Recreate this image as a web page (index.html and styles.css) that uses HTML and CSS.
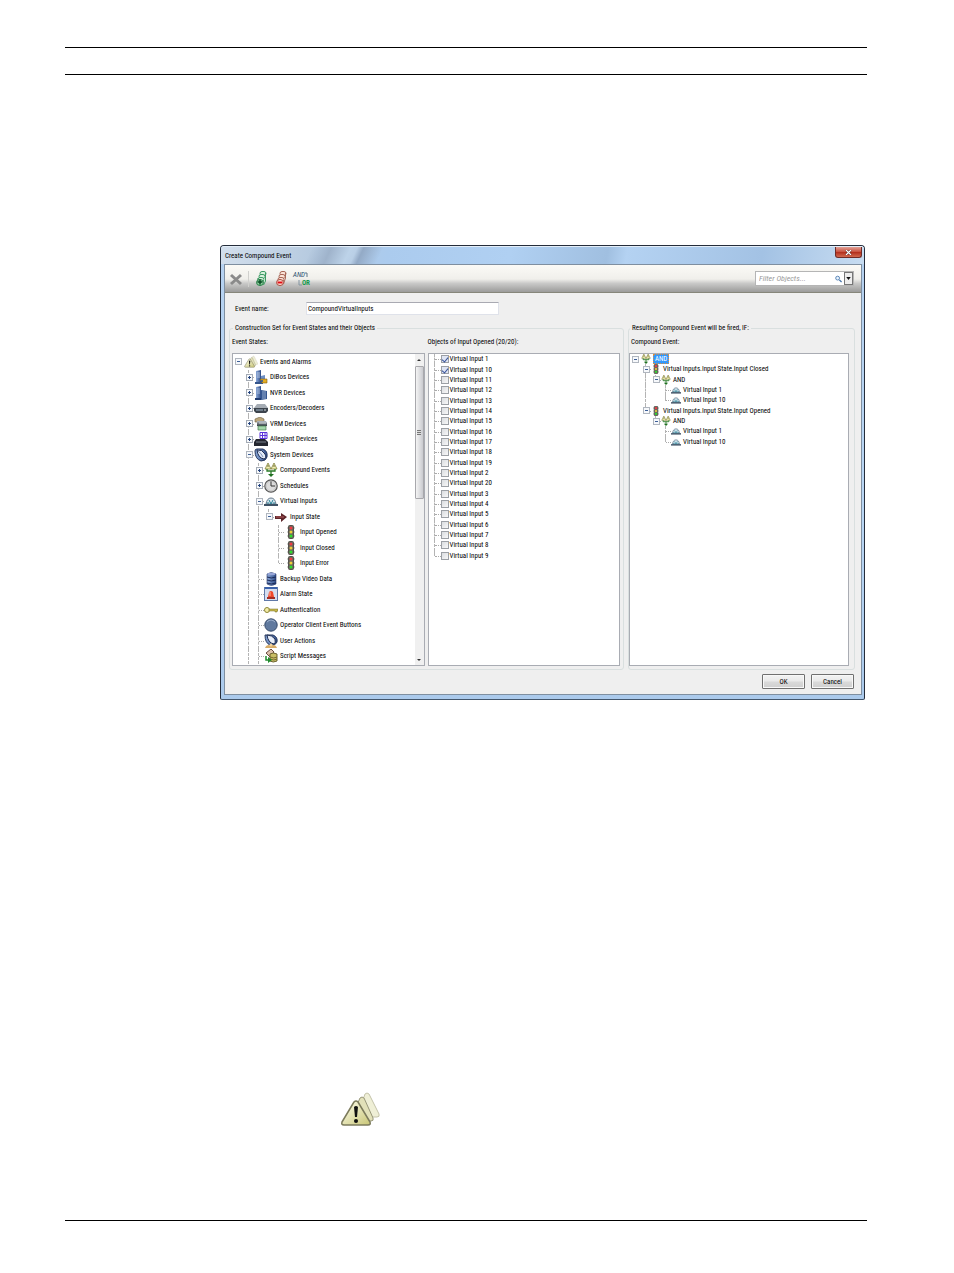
FILE: index.html
```html
<!DOCTYPE html>
<html lang="en">
<head>
<meta charset="utf-8">
<title>Create Compound Event</title>
<link rel="stylesheet" href="styles.css">
</head>
<body>
<svg class="defs" aria-hidden="true">
<defs>
<linearGradient id="blue" x1="0" x2="1"><stop offset="0" stop-color="#8aa8d8"/><stop offset="1" stop-color="#2c4a86"/></linearGradient>
<linearGradient id="grey" x1="0" x2="0" y1="0" y2="1"><stop offset="0" stop-color="#b8c0c8"/><stop offset="1" stop-color="#30363e"/></linearGradient>
<linearGradient id="cream" x1="0" x2="1" y1="0" y2="1"><stop offset="0" stop-color="#fffff0"/><stop offset="1" stop-color="#c9c676"/></linearGradient>
<symbol id="plus" viewBox="0 0 7 7"><rect x=".5" y=".5" width="6" height="6" fill="#f6f8fb" stroke="#a4abb5"/><path d="M2 3.5h3M3.500 2v3" stroke="#26457f"/></symbol>
<symbol id="minus" viewBox="0 0 7 7"><rect x=".5" y=".5" width="6" height="6" fill="#f6f8fb" stroke="#b0b6bf"/><path d="M2 3.500h3" stroke="#3d5f98"/></symbol>
<symbol id="warn" viewBox="0 0 40 36"><g stroke-linejoin="round"><path d="M25 2q2-2 4 0l10 20q1 3-2 3H17z" fill="#efefd6" stroke="#c4c3aa"/><path d="M20 6q2-2 4 0l9 20q1 3-2 3H10z" fill="#e2e1b9" stroke="#98977a"/><path d="M14 10q2-2 4 0l12 20q1 3-2 3H4q-3 0-2-3z" fill="url(#cream)" stroke="#7c7b5c" stroke-width="1.500"/></g><path d="M14 15q2-2 4 0l-1 10h-2z" fill="#111"/><circle cx="16" cy="29" r="2" fill="#111"/></symbol>
<symbol id="dibos" viewBox="0 0 14 14"><path d="M2 1l5-1v12H2z" fill="url(#blue)"/><path d="M7 6l4-1v7H7z" fill="#6d8ec2"/><path d="M3 3h3M3 5h3M3 7h3" stroke="#dbe7f8" stroke-width=".7"/><path d="M1 12h8v2H1z" fill="#34558c"/><path d="M6 9h7v4H8z" fill="#e4ad22" stroke="#805a12" stroke-width=".6"/><circle cx="8" cy="11" r="1" fill="#2653a0"/></symbol>
<symbol id="nvr" viewBox="0 0 14 14"><path d="M2 1l5-1v13H2z" fill="url(#blue)"/><path d="M7 4l6 1v8l-6 1z" fill="#34558f"/><path d="M3 3h3M3 5h3M3 7h3M8 6h4M8 8h4M8 10h4M8 12h4" stroke="#c3d4ec" stroke-width=".7"/><path d="M1 12h6v2H1z" fill="#203c70"/></symbol>
<symbol id="enc" viewBox="0 0 14 14"><path d="M3 3h8l3 4H0z" fill="#a5acb4"/><path d="M0 7h14v3l-2 2H2l-2-2z" fill="#3c444d"/><path d="M2 9h7" stroke="#9eb3c7"/><circle cx="11" cy="9" r=".8" fill="#e5edf4"/></symbol>
<symbol id="vrm" viewBox="0 0 14 14"><path d="M1 2l5-2 4 2v3H1z" fill="#bca77c" stroke="#6e6042" stroke-width=".6"/><path d="M3 4h9l1 2v3H3z" fill="url(#grey)"/><path d="M4 9h8v4H4z" fill="#a3d6aa" stroke="#477b51" stroke-width=".7"/><path d="M5 6h7" stroke="#d3d8dc"/></symbol>
<symbol id="alleg" viewBox="0 0 14 14"><path d="M6 0h7v7H6z" fill="#fff"/><path d="M6 .5h7v6H6zM8.500 0v7M11 0v7M6 3.500h7" stroke="#5a33db" fill="none"/><path d="M2 7h9l3 3v4H0v-4z" fill="#252730"/><path d="M2 10h10" stroke="#7d838c"/></symbol>
<symbol id="sys" viewBox="0 0 14 14"><path d="M1 3q0-2 2-2h6q5 2 4 8-1 4-6 4-6-2-6-10z" fill="url(#blue)" stroke="#26375c"/><path d="M3 2q5-1 8 4 2 4-1 5-6-1-7-9z" fill="#e3ebf8" stroke="#1d2c50"/><path d="M4 3q3 2 5 6" stroke="#7f93ba" fill="none"/></symbol>
<symbol id="comp" viewBox="0 0 14 14"><path d="M4 0l3 6H1zM10 0l3 6H7z" fill="#f2efb0" stroke="#80803c" stroke-width=".8"/><path d="M4 2v2M10 2v2" stroke="#4c4a20" stroke-width=".8"/><path d="M3 6v2h8V6M7 8v4" stroke="#2a7a27" fill="none" stroke-width="1.300"/><path d="M4 11h6l-3 3z" fill="#1f7021"/></symbol>
<symbol id="clock" viewBox="0 0 14 14"><circle cx="7" cy="7" r="6.200" fill="#dcdcdc" stroke="#555" stroke-width="1.200"/><path d="M7 2v5h4" stroke="#333" fill="none"/><circle cx="7" cy="7" r="4.800" fill="none" stroke="#bbb" stroke-width=".6"/></symbol>
<symbol id="vin" viewBox="0 0 14 14"><path d="M2 10q1-6 5-6t5 6z" fill="#dce9f1" stroke="#66798b"/><path d="M0 10h14v2H0z" fill="#3e5265"/><path d="M5 6l2 4 2-4M3 9h2M9 9h2" stroke="#258095" fill="none"/></symbol>
<symbol id="arrow" viewBox="0 0 14 14"><path d="M1 6h6V3l6 4-6 5V9H1z" fill="#5d2529"/><path d="M2 7h8" stroke="#b55f60"/></symbol>
<symbol id="light" viewBox="0 0 14 14"><path d="M3.500 3h7M3.500 7h7M3.500 11h7" stroke="#8a8a86" stroke-width="1.500"/><rect x="4.500" y=".5" width="5" height="13" rx="1" fill="#6a685f" stroke="#54524b"/><circle cx="7" cy="3" r="1.500" fill="#f23b45"/><circle cx="7" cy="7" r="1.500" fill="#f0ce3a"/><circle cx="7" cy="11" r="1.500" fill="#2ce12c"/></symbol>
<symbol id="db" viewBox="0 0 14 14"><path d="M3 2q4-3 9 0v10q-5 3-9 0z" fill="url(#blue)" stroke="#283867" stroke-width=".6"/><path d="M3 5q4 2 9 0M3 8q4 2 9 0M3 11q4 2 9 0" stroke="#1d2b58" fill="none"/><ellipse cx="7.500" cy="2" rx="4" ry="1.300" fill="#96a5d7"/></symbol>
<symbol id="alarm" viewBox="0 0 14 14"><rect x=".5" y=".5" width="13" height="13" fill="#d5def0" stroke="#6079a8"/><path d="M1 1h12" stroke="#3a61aa" stroke-width="2"/><path d="M4 10l1-5q2-2 4 0l1 5z" fill="#f0482c"/><path d="M6 5v4" stroke="#ffb49c"/><path d="M3 10h8v2H3z" fill="#a22d25"/></symbol>
<symbol id="key" viewBox="0 0 14 14"><ellipse cx="3" cy="7" rx="2.500" ry="2.500" fill="#f3eda8" stroke="#8d8534"/><path d="M5 6h9v2h-1v1h-2V8H5z" fill="#c6b84c" stroke="#776d26" stroke-width=".5"/></symbol>
<symbol id="round" viewBox="0 0 14 14"><circle cx="7" cy="7" r="6.200" fill="#60799e" stroke="#354a6a"/><path d="M3 4q4-4 8 0" stroke="#9fb2ce" fill="none"/></symbol>
<symbol id="user" viewBox="0 0 14 14"><path d="M1 1h8q5 2 4 7-2 4-7 3-5-2-5-10z" fill="url(#blue)" stroke="#26375c"/><path d="M3 1q5 0 8 4 1 4-1 5-6-1-7-9z" fill="#e8eefa" stroke="#1d2c50"/><path d="M1 14q1-3 4-3l2 1 2-1q3 0 4 3z" fill="#d8ac67"/><circle cx="7" cy="11" r="1.500" fill="#f1d29c"/></symbol>
<symbol id="script" viewBox="0 0 14 14"><path d="M2 4l5-4 3 3-4 5z" fill="#ddc1ac" stroke="#694b42"/><path d="M6 5q3-2 7 0v7q-4 2-7 0z" fill="#c8bd65" stroke="#6c6230"/><path d="M6 8q4 2 7 0M6 10q4 2 7 0" stroke="#766a2f" fill="none"/><path d="M2 7v4h3" stroke="#1f8b2d" fill="none" stroke-width="1.500"/><path d="M4 8l4 3-4 3z" fill="#1f8b2d"/></symbol>
</defs>
</svg>

<div class="page">
<header class="page-head"></header>
<main>
<section class="dialog" aria-label="Create Compound Event">
  <div class="titlebar">
    <h1>Create Compound Event</h1>
    <button class="close" aria-label="Close"><svg viewBox="0 0 8 6"><path d="M1 0l6 6M7 0L1 6" stroke="#4d2020" stroke-width="2.600"/><path d="M1 0l6 6M7 0L1 6" stroke="#fff" stroke-width="1.500"/></svg></button>
  </div>
  <div class="frame">
    <div class="toolbar">
      <button class="tool" aria-label="Delete"><svg viewBox="0 0 16 18"><path d="M3 5l10 9M13 5L3 14" stroke="#8a8a8a" stroke-width="3"/></svg></button>
      <span class="sep"></span>
      <button class="tool" aria-label="Add objects"><svg viewBox="0 0 16 18"><g fill="#d7f0dc" stroke="#3d9a63"><rect x="7" y="1.500" width="6" height="4" rx="2"/><rect x="6" y="4.500" width="6" height="4" rx="2"/><rect x="5" y="7.500" width="6" height="4" rx="2"/><path d="M5 8v5M12.500 3v8l-2 4"/></g><ellipse cx="7" cy="12.500" rx="3.500" ry="3" fill="#8fce9e" stroke="#278048"/><path d="M4.500 12h5M7 9.500v5" stroke="#074c24" stroke-width="1.500"/></svg></button>
      <button class="tool" aria-label="Remove objects"><svg viewBox="0 0 16 18"><g fill="#fae2d6" stroke="#a86758"><rect x="7" y="1.500" width="6" height="4" rx="2"/><rect x="6" y="4.500" width="6" height="4" rx="2"/><rect x="5" y="7.500" width="6" height="4" rx="2"/><path d="M12.500 3v5l-2 6"/></g><ellipse cx="7" cy="12.500" rx="3.500" ry="3" fill="#ffe6dc" stroke="#a5493b"/><path d="M4.500 12.500h5" stroke="#e00d14" stroke-width="2"/></svg></button>
      <button class="tool andor"><i>AND<svg viewBox="0 0 4 6"><path d="M0 1h2v4" fill="none" stroke="#5e7587"/></svg></i><b><svg viewBox="0 0 4 6"><path d="M1 0v5h3" fill="none" stroke="#8496a3"/></svg>OR</b></button>
      <div class="filter">
        <input type="text" aria-label="Filter objects" placeholder="Filter Objects...">
        <svg viewBox="0 0 8 8"><circle cx="3" cy="3" r="2.200" fill="#e8f2fc" stroke="#4a7ab0"/><path d="M5 5l2.500 2.500" stroke="#416fa6" stroke-width="1.500"/></svg>
        <button aria-label="Filter options"><svg viewBox="0 0 6 4"><path d="M0 0h6L3 4z" fill="#111"/></svg></button>
      </div>
    </div>

    <div class="name-row">
      <label for="event-name">Event name:</label>
      <input id="event-name" type="text" value="CompoundVirtualInputs">
    </div>

    <div class="panels">
      <fieldset class="construct">
        <legend>Construction Set for Event States and their Objects</legend>
        <div class="column">
          <h2>Event States:</h2>
          <div class="box scroll-box">
            <ul class="tree big">
              <li><span class="g"><svg><use href="#minus"/></svg></span><svg class="ic"><use href="#warn"/></svg>Events and Alarms</li>
              <li><span class="g"></span><span class="g t"><svg><use href="#plus"/></svg></span><svg class="ic"><use href="#dibos"/></svg>DiBos Devices</li>
              <li><span class="g"></span><span class="g t"><svg><use href="#plus"/></svg></span><svg class="ic"><use href="#nvr"/></svg>NVR Devices</li>
              <li><span class="g"></span><span class="g t"><svg><use href="#plus"/></svg></span><svg class="ic"><use href="#enc"/></svg>Encoders/Decoders</li>
              <li><span class="g"></span><span class="g t"><svg><use href="#plus"/></svg></span><svg class="ic"><use href="#vrm"/></svg>VRM Devices</li>
              <li><span class="g"></span><span class="g t"><svg><use href="#plus"/></svg></span><svg class="ic"><use href="#alleg"/></svg>Allegiant Devices</li>
              <li><span class="g"></span><span class="g t"><svg><use href="#minus"/></svg></span><svg class="ic"><use href="#sys"/></svg>System Devices</li>
              <li><span class="g"></span><span class="g v"></span><span class="g t"><svg><use href="#plus"/></svg></span><svg class="ic"><use href="#comp"/></svg>Compound Events</li>
              <li><span class="g"></span><span class="g v"></span><span class="g t"><svg><use href="#plus"/></svg></span><svg class="ic"><use href="#clock"/></svg>Schedules</li>
              <li><span class="g"></span><span class="g v"></span><span class="g t"><svg><use href="#minus"/></svg></span><svg class="ic"><use href="#vin"/></svg>Virtual Inputs</li>
              <li><span class="g"></span><span class="g v"></span><span class="g v"></span><span class="g l"><svg><use href="#minus"/></svg></span><svg class="ic"><use href="#arrow"/></svg>Input State</li>
              <li><span class="g"></span><span class="g v"></span><span class="g v"></span><span class="g"></span><span class="g t"></span><svg class="ic"><use href="#light"/></svg>Input Opened</li>
              <li><span class="g"></span><span class="g v"></span><span class="g v"></span><span class="g"></span><span class="g t"></span><svg class="ic"><use href="#light"/></svg>Input Closed</li>
              <li><span class="g"></span><span class="g v"></span><span class="g v"></span><span class="g"></span><span class="g l"></span><svg class="ic"><use href="#light"/></svg>Input Error</li>
              <li><span class="g"></span><span class="g v"></span><span class="g t"></span><svg class="ic"><use href="#db"/></svg>Backup Video Data</li>
              <li><span class="g"></span><span class="g v"></span><span class="g t"></span><svg class="ic"><use href="#alarm"/></svg>Alarm State</li>
              <li><span class="g"></span><span class="g v"></span><span class="g t"></span><svg class="ic"><use href="#key"/></svg>Authentication</li>
              <li><span class="g"></span><span class="g v"></span><span class="g t"></span><svg class="ic"><use href="#round"/></svg>Operator Client Event Buttons</li>
              <li><span class="g"></span><span class="g v"></span><span class="g t"></span><svg class="ic"><use href="#user"/></svg>User Actions</li>
              <li><span class="g"></span><span class="g v"></span><span class="g t"></span><svg class="ic"><use href="#script"/></svg>Script Messages</li>
            </ul>
            <div class="scrollbar">
              <svg viewBox="0 0 8 12"><path d="M2 7h4L4 5z" fill="#333"/></svg>
              <div class="thumb"><span></span></div>
              <svg viewBox="0 0 8 12"><path d="M2 6h4L4 8z" fill="#333"/></svg>
            </div>
          </div>
        </div>
        <div class="column">
          <h2>Objects of Input Opened (20/20):</h2>
          <div class="box">
            <ul class="tree checks">
              <li><span class="g t"></span><label><input type="checkbox" checked>Virtual Input 1</label></li>
              <li><span class="g t"></span><label><input type="checkbox" checked>Virtual Input 10</label></li>
              <li><span class="g t"></span><label><input type="checkbox">Virtual Input 11</label></li>
              <li><span class="g t"></span><label><input type="checkbox">Virtual Input 12</label></li>
              <li><span class="g t"></span><label><input type="checkbox">Virtual Input 13</label></li>
              <li><span class="g t"></span><label><input type="checkbox">Virtual Input 14</label></li>
              <li><span class="g t"></span><label><input type="checkbox">Virtual Input 15</label></li>
              <li><span class="g t"></span><label><input type="checkbox">Virtual Input 16</label></li>
              <li><span class="g t"></span><label><input type="checkbox">Virtual Input 17</label></li>
              <li><span class="g t"></span><label><input type="checkbox">Virtual Input 18</label></li>
              <li><span class="g t"></span><label><input type="checkbox">Virtual Input 19</label></li>
              <li><span class="g t"></span><label><input type="checkbox">Virtual Input 2</label></li>
              <li><span class="g t"></span><label><input type="checkbox">Virtual Input 20</label></li>
              <li><span class="g t"></span><label><input type="checkbox">Virtual Input 3</label></li>
              <li><span class="g t"></span><label><input type="checkbox">Virtual Input 4</label></li>
              <li><span class="g t"></span><label><input type="checkbox">Virtual Input 5</label></li>
              <li><span class="g t"></span><label><input type="checkbox">Virtual Input 6</label></li>
              <li><span class="g t"></span><label><input type="checkbox">Virtual Input 7</label></li>
              <li><span class="g t"></span><label><input type="checkbox">Virtual Input 8</label></li>
              <li><span class="g l"></span><label><input type="checkbox">Virtual Input 9</label></li>
            </ul>
          </div>
        </div>
      </fieldset>

      <fieldset class="result">
        <legend>Resulting Compound Event will be fired, IF:</legend>
        <div class="column">
          <h2>Compound Event:</h2>
          <div class="box">
            <ul class="tree small">
              <li><span class="g"><svg><use href="#minus"/></svg></span><svg class="ic"><use href="#comp"/></svg><span class="selected">AND</span></li>
              <li><span class="g"></span><span class="g t"><svg><use href="#minus"/></svg></span><svg class="ic"><use href="#light"/></svg>Virtual Inputs.Input State.Input Closed</li>
              <li><span class="g"></span><span class="g v"></span><span class="g l"><svg><use href="#minus"/></svg></span><svg class="ic"><use href="#comp"/></svg>AND</li>
              <li><span class="g"></span><span class="g v"></span><span class="g"></span><span class="g t"></span><svg class="ic"><use href="#vin"/></svg>Virtual Input 1</li>
              <li><span class="g"></span><span class="g v"></span><span class="g"></span><span class="g l"></span><svg class="ic"><use href="#vin"/></svg>Virtual Input 10</li>
              <li><span class="g"></span><span class="g l"><svg><use href="#minus"/></svg></span><svg class="ic"><use href="#light"/></svg>Virtual Inputs.Input State.Input Opened</li>
              <li><span class="g"></span><span class="g"></span><span class="g l"><svg><use href="#minus"/></svg></span><svg class="ic"><use href="#comp"/></svg>AND</li>
              <li><span class="g"></span><span class="g"></span><span class="g"></span><span class="g t"></span><svg class="ic"><use href="#vin"/></svg>Virtual Input 1</li>
              <li><span class="g"></span><span class="g"></span><span class="g"></span><span class="g l"></span><svg class="ic"><use href="#vin"/></svg>Virtual Input 10</li>
            </ul>
          </div>
        </div>
      </fieldset>
    </div>

    <div class="actions"><button>OK</button><button>Cancel</button></div>
  </div>
</section>
<svg class="notice" role="img" aria-label="Compound event"><use href="#warn"/></svg>
</main>
<footer class="page-foot"></footer>
</div>
</body>
</html>
```
FILE: styles.css
```css
* { box-sizing: border-box; }
body { margin: 0; background: #fff; color: #000; font: 7px/10px "Roboto Condensed", "Open Sans Condensed", Lato, sans-serif; }
button, input { font: inherit; color: inherit; margin: 0; padding: 0; }
h1, h2, ul { margin: 0; padding: 0; font: inherit; list-style: none; }
svg { display: block; }
.defs { position: absolute; width: 0; height: 0; }

.page { min-height: 100vh; padding: 47px 87px 52px 65px; display: flex; flex-direction: column; }
.page-head { height: 28px; border-top: 1px solid #000; border-bottom: 1px solid #000; }
.page-foot { border-top: 1px solid #000; }
main { flex: 1; padding: 170px 2px 0 155px; }
.notice { width: 40px; height: 36px; margin: 392px 0 0 120px; }

.dialog {
  border: 1px solid #252d3b; border-bottom-color: #43566c; border-radius: 4px 4px 2px 2px; padding: 0 2px 4px 3px;
  background: linear-gradient(#b5d1f0, #b9d6f4 60%, #abcaec);
}
.titlebar {
  display: flex; justify-content: space-between; height: 18px; margin: 0 -2px 0 -3px; padding-left: 4px;
  background:
    linear-gradient(115deg, transparent 14%, #9fb3cb 17%, #bdd3e9 20%, #b9cfe6 21%, #93aac6 22%, transparent 25%),
    linear-gradient(100deg, #d3dfec, #b7cbe0 14%, #abcbee 26%, #b0d0f2 45%, #a0bfe0 60%, #b4d2f2 63%, #a3c2e4 84%, #c7dcf1);
  border-top: 1px solid #e4eef8; border-radius: 3px 3px 0 0;
}
.titlebar h1 { line-height: 18px; }
.close {
  width: 27px; height: 11px; margin-right: 2px; display: grid; place-items: center;
  border: 1px solid #6e2b27; border-top: 0; border-radius: 0 0 3px 3px;
  background: linear-gradient(#e2a297, #c9513f 48%, #b22e1c 52%, #d2694f);
}
.close svg { width: 7px; height: 5px; }
.frame { border: 1px solid #7f8fa0; background: #efefef; }

.toolbar {
  display: flex; align-items: center; height: 28px; padding: 0 7px 0 3px;
  background: linear-gradient(#fbfaf6, #f0efeb 52%, #c9c9c8 68%, #9b9b9a); border-bottom: 1px solid #86867a;
}
.tool { width: 16px; height: 18px; border: 0; background: none; margin-right: 4px; }
.tool svg { width: 16px; height: 18px; }
.sep { width: 1px; height: 16px; background: #d0d0cd; margin-right: 4px; }
.andor { width: 17px; line-height: 8px; color: #244b6c; }
.andor i, .andor b { display: flex; align-items: center; height: 8px; }
.andor b { color: #159a4d; justify-content: flex-end; }
.andor svg { width: 4px; height: 6px; }
.filter { display: flex; align-items: center; width: 99px; height: 15px; margin-left: auto; background: #fff; border: 1px solid #b5b5b5; }
.filter input { flex: 1; min-width: 0; border: 0; padding-left: 3px; background: none; font-size: 8px; }
.filter input::placeholder { color: #9a9a9a; font-style: italic; }
.filter > svg { width: 7px; height: 8px; margin-right: 2px; }
.filter button { width: 9px; height: 13px; display: grid; place-items: center; border: 1px solid #777; background: #eee; }
.filter button svg { width: 5px; height: 3px; }

.name-row { display: flex; align-items: center; padding: 9px 10px 0; }
.name-row label { width: 71px; }
.name-row input { width: 193px; height: 13px; padding: 0 1px; border: 1px solid #dfe2ea; border-top-color: #a9aab2; background: #fff; }

.panels { display: grid; grid-template-columns: 395fr 227fr; gap: 4px; padding: 8px 6px 0 4px; }
fieldset { min-width: 0; margin: 0; padding: 4px 3px 3px; border: 1px solid #d9dfdf; border-radius: 3px; display: grid; }
.construct { grid-template-columns: 1fr 1fr; gap: 3px; padding-left: 2px; }
.result { padding: 4px 5px 3px 0; }
legend { padding: 0 2px; margin-left: 1px; }
.column { min-width: 0; display: grid; grid-template-rows: 10px 1fr; gap: 6px; }
.result h2 { padding-left: 2px; }
.box { min-width: 0; height: 313px; background: #fff; border: 1px solid #a9acb3; overflow: hidden; }
.scroll-box { display: flex; }

.tree li, .checks label { display: flex; align-items: center; white-space: nowrap; }
.tree li { min-height: 0; }
.tree { display: grid; grid-auto-rows: 1fr; }
.big { flex: 1; min-width: 0; padding-bottom: 1px; }
.checks { height: 207px; padding-left: 1px; }
.small { height: 93px; }
.g { position: relative; flex: none; align-self: stretch; display: grid; place-items: center; width: 10px; }
.g:first-child { width: 11px; }
.g svg { position: relative; z-index: 1; width: 7px; height: 7px; }
.t::before, .v::before, .l::before { content: ""; position: absolute; left: 4px; top: 0; bottom: 0; border-left: 1px dashed #b4b4b4; }
.l::before { bottom: 50%; }
.t::after, .l::after { content: ""; position: absolute; left: 5px; right: 0; top: 50%; border-top: 1px dotted #aaa; }
.ic { flex: none; width: 14px; height: 14px; margin-right: 2px; }
.small .ic { width: 10px; height: 10px; }
.selected { padding: 0 2px; color: #fff; background: #3398fb; outline: 1px dotted #d98e3f; outline-offset: -1px; }
.checks input { appearance: none; display: grid; place-items: center; width: 8px; height: 8px; margin-right: 1px; border: 1px solid #9ca0a5; background: linear-gradient(135deg, #dadde0, #f8f8f8); }
.checks input:checked { background: #dfe5f3; }
.checks input:checked::before { content: ""; width: 3px; height: 5px; border: solid #38539a; border-width: 0 1px 1px 0; transform: rotate(40deg); }

.scrollbar { width: 9px; display: flex; flex-direction: column; background: #f0f0f0; }
.scrollbar > svg { width: 8px; height: 12px; }
.thumb { height: 133px; margin-bottom: auto; display: grid; place-items: center; border: 1px solid #a8a8ac; border-radius: 1px; background: linear-gradient(90deg, #f4f4f4, #c9cacf); }
.thumb span { width: 4px; height: 5px; background: repeating-linear-gradient(#777 0 1px, #ddd 1px 2px); }

.actions { display: flex; justify-content: flex-end; gap: 6px; padding: 4px 7px 5px; }
.actions button { width: 43px; height: 15px; border: 1px solid #707070; border-radius: 1px; background: linear-gradient(#f3f3f3, #e9e9e9 48%, #dadada 52%, #cfcfcf); box-shadow: inset 0 0 0 1px #f8f8f8; }
```
